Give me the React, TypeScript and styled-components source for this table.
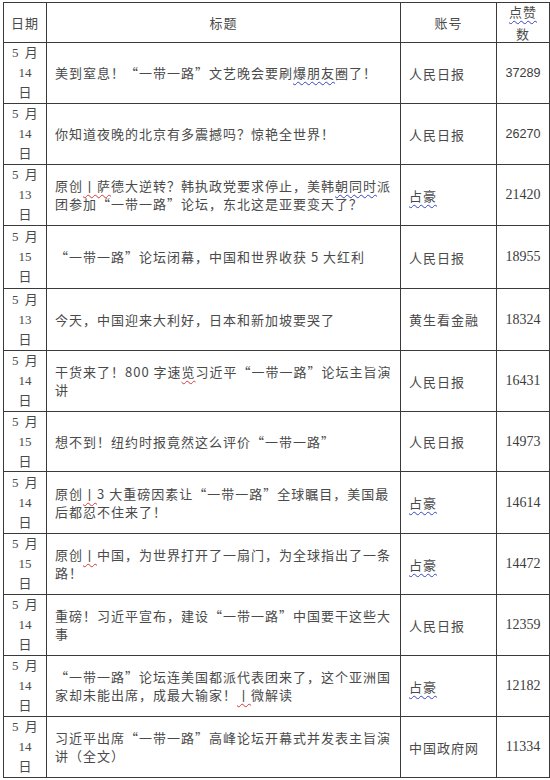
import React from 'react';
import styled, {createGlobalStyle, css} from 'styled-components';

const GlobalStyle = createGlobalStyle`
	html, body {
		margin: 0;
		padding: 0;
		background: #fff;
	}
`;

const cjk = `"Noto Sans CJK SC", "DejaVu Sans", sans-serif`;
const lineColor = '#3a3a3a';

const Sheet = styled.div<{readonly $rows: string}>`
	display: grid;
	grid-template-columns: 43px 354px 96px 53px;
	grid-template-rows: ${props => props.$rows};
	width: max-content;
	margin: 2px 0 0 3px;
	border-left: 1px solid ${lineColor};
	border-top: 1px solid ${lineColor};
	font-family: ${cjk};
	font-weight: 400;
	color: #4a4a4a;
`;

const cellBase = css`
	box-sizing: border-box;
	display: flex;
	align-items: center;
	border-right: 1px solid ${lineColor};
	border-bottom: 1px solid ${lineColor};
	overflow: hidden;
`;

const HeadCell = styled.div<{readonly $stack?: boolean}>`
	${cellBase}
	justify-content: center;
	font-size: 13px;
	letter-spacing: 1px;
	${props => props.$stack && css`
		flex-direction: column;
		line-height: 22px;
	`}
`;

const DateCell = styled.div`
	${cellBase}
	flex-direction: column;
	justify-content: center;
	font-family: "Liberation Serif", ${cjk};
	font-size: 13px;
	line-height: 20px;
	word-spacing: 3px;
	color: #4a4a4a;
`;

const TitleCell = styled.div`
	${cellBase}
	padding: 0 4px 0 8px;
	font-size: 13px;
	letter-spacing: 1px;
	line-height: 18px;
`;

const TitleLines = styled.div`
	display: flex;
	flex-direction: column;
	white-space: nowrap;
`;

const AccountCell = styled.div`
	${cellBase}
	padding-left: 8px;
	font-size: 13px;
	letter-spacing: 1px;
`;

const CountCell = styled.div<{readonly $sans?: boolean}>`
	${cellBase}
	justify-content: center;
	font-family: ${props => props.$sans ? '"Liberation Sans", sans-serif' : '"Liberation Serif", serif'};
	font-size: ${props => props.$sans ? '12.6px' : '14px'};
	color: #3c3c3c;
`;

const Mark = styled.span<{readonly $tone: 'red' | 'blue'}>`
	text-decoration: underline wavy ${props => props.$tone === 'red' ? '#d23a3a' : '#3446c4'};
	text-decoration-thickness: 1px;
	text-underline-offset: 3px;
`;

type Row = {
	day: string;
	title: React.ReactNode[];
	account: string;
	count: string;
	sans?: boolean;
	height: number;
};

const Zhan = () => <Mark $tone='blue'>占豪</Mark>;

const rows: Row[] = [
	{
		day: '14',
		title: [<>美到窒息！“一带一路”文艺晚会要刷<Mark $tone='blue'>爆朋友</Mark>圈了！</>],
		account: '人民日报',
		count: '37289',
		sans: true,
		height: 61,
	},
	{
		day: '14',
		title: ['你知道夜晚的北京有多震撼吗？惊艳全世界！'],
		account: '人民日报',
		count: '26270',
		sans: true,
		height: 61,
	},
	{
		day: '13',
		title: [
			<>原创<Mark $tone='red'>丨萨</Mark>德大逆转？韩执政党要求停止，美韩<Mark $tone='blue'>朝同时</Mark>派</>,
			'团参加“一带一路”论坛，东北这是亚要变天了？',
		],
		account: '占豪',
		count: '21420',
		height: 61,
	},
	{
		day: '15',
		title: ['“一带一路”论坛闭幕，中国和世界收获 5 大红利'],
		account: '人民日报',
		count: '18955',
		height: 63,
	},
	{
		day: '13',
		title: ['今天，中国迎来大利好，日本和新加坡要哭了'],
		account: '黄生看金融',
		count: '18324',
		height: 62,
	},
	{
		day: '14',
		title: [<>干货来了！800 字速<Mark $tone='red'>览</Mark>习近平“一带一路”论坛主旨演</>, '讲'],
		account: '人民日报',
		count: '16431',
		height: 61,
	},
	{
		day: '15',
		title: ['想不到！纽约时报竟然这么评价“一带一路”'],
		account: '人民日报',
		count: '14973',
		height: 60,
	},
	{
		day: '14',
		title: [<>原创<Mark $tone='red'>丨</Mark>3 大重磅因素让“一带一路”全球瞩目，美国最</>, '后都忍不住来了！'],
		account: '占豪',
		count: '14614',
		height: 62,
	},
	{
		day: '15',
		title: [<>原创<Mark $tone='red'>丨</Mark>中国，为世界打开了一扇门，为全球指出了一条</>, '路！'],
		account: '占豪',
		count: '14472',
		height: 61,
	},
	{
		day: '14',
		title: ['重磅！习近平宣布，建设“一带一路”中国要干这些大', '事'],
		account: '人民日报',
		count: '12359',
		height: 61,
	},
	{
		day: '14',
		title: [
			'“一带一路”论坛连美国都派代表团来了，这个亚洲国',
			<>家却未能出席，成最大输家！<Mark $tone='red'>丨</Mark>微解读</>,
		],
		account: '占豪',
		count: '12182',
		height: 61,
	},
	{
		day: '14',
		title: ['习近平出席“一带一路”高峰论坛开幕式并发表主旨演', '讲（全文）'],
		account: '中国政府网',
		count: '11334',
		height: 61,
	},
];

export default function App() {
	const template = ['40px', ...rows.map(row => `${row.height}px`)].join(' ');

	return (
		<>
			<GlobalStyle/>
			<Sheet lang='zh-CN' $rows={template}>
				<HeadCell>日期</HeadCell>
				<HeadCell>标题</HeadCell>
				<HeadCell>账号</HeadCell>
				<HeadCell $stack>
					<Mark $tone='blue'>点赞</Mark>
					<Mark $tone='blue'>数</Mark>
				</HeadCell>
				{rows.map((row, index) => (
					<React.Fragment key={index}>
						<DateCell>
							<span>5 月</span>
							<span>{row.day}</span>
							<span>日</span>
						</DateCell>
						<TitleCell>
							<TitleLines>
								{row.title.map((line, i) => <span key={i}>{line}</span>)}
							</TitleLines>
						</TitleCell>
						<AccountCell>
							{row.account === '占豪' ? <Zhan/> : row.account}
						</AccountCell>
						<CountCell $sans={row.sans}>{row.count}</CountCell>
					</React.Fragment>
				))}
			</Sheet>
		</>
	);
}
